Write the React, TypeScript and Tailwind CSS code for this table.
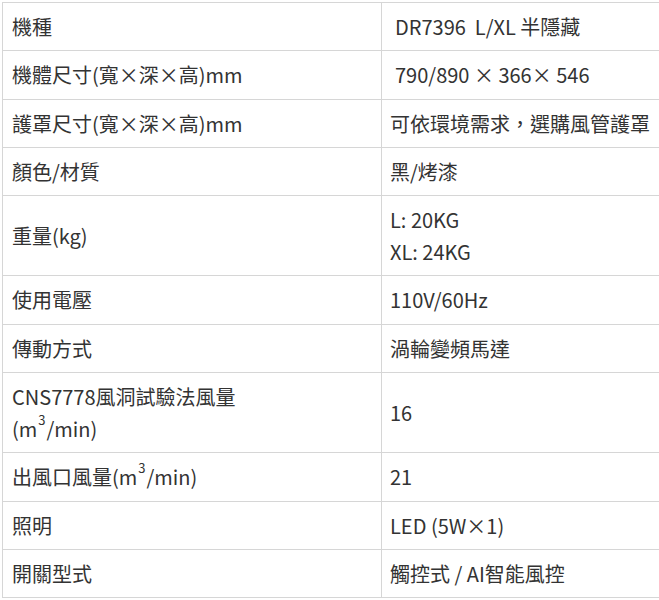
import React from "react";

type Row = { label: React.ReactNode; value: React.ReactNode; indent?: boolean };

const rows: Row[] = [
  { label: "機種", value: "DR7396\u00a0 L/XL 半隱藏", indent: true },
  { label: "機體尺寸(寬×深×高)mm", value: "790/890 × 366× 546", indent: true },
  { label: "護罩尺寸(寬×深×高)mm", value: "可依環境需求，選購風管護罩" },
  { label: "顏色/材質", value: "黑/烤漆" },
  {
    label: "重量(kg)",
    value: (
      <>
        L: 20KG
        <br />
        XL: 24KG
      </>
    ),
  },
  { label: "使用電壓", value: "110V/60Hz" },
  { label: "傳動方式", value: "渦輪變頻馬達" },
  {
    label: (
      <>
        CNS7778風洞試驗法風量
        <br />
        (m<sup className="text-[13px] align-[6px] px-[1px]">3</sup>/min)
      </>
    ),
    value: "16",
  },
  {
    label: (
      <>
        出風口風量(m<sup className="text-[13px] align-[6px] px-[1px]">3</sup>/min)
      </>
    ),
    value: "21",
  },
  { label: "照明", value: "LED (5W×1)" },
  { label: "開關型式", value: "觸控式 / AI智能風控" },
];

export default function App() {
  return (
    <div className="w-[659px] h-[600px] overflow-hidden bg-white pt-[2px] pl-[2px]">
      <table
        className="w-[720px] border-collapse text-[20px] leading-[32px] text-[#333]"
        style={{ fontFamily: '"Noto Sans CJK TC", "Noto Sans", sans-serif' }}
      >
        <tbody>
          {rows.map((row, i) => (
            <tr key={i}>
              <td className="w-[379px] border border-[#d6d6d6] pl-[9px] pr-[9px] pt-[8px] pb-[7.3px] align-middle">
                {row.label}
              </td>
              <td
                className={
                  "border border-[#d6d6d6] pr-[9px] pt-[8px] pb-[7.3px] align-middle whitespace-nowrap " +
                  (row.indent ? "pl-[13px]" : "pl-[8px]")
                }
              >
                {row.value}
              </td>
            </tr>
          ))}
        </tbody>
      </table>
    </div>
  );
}
